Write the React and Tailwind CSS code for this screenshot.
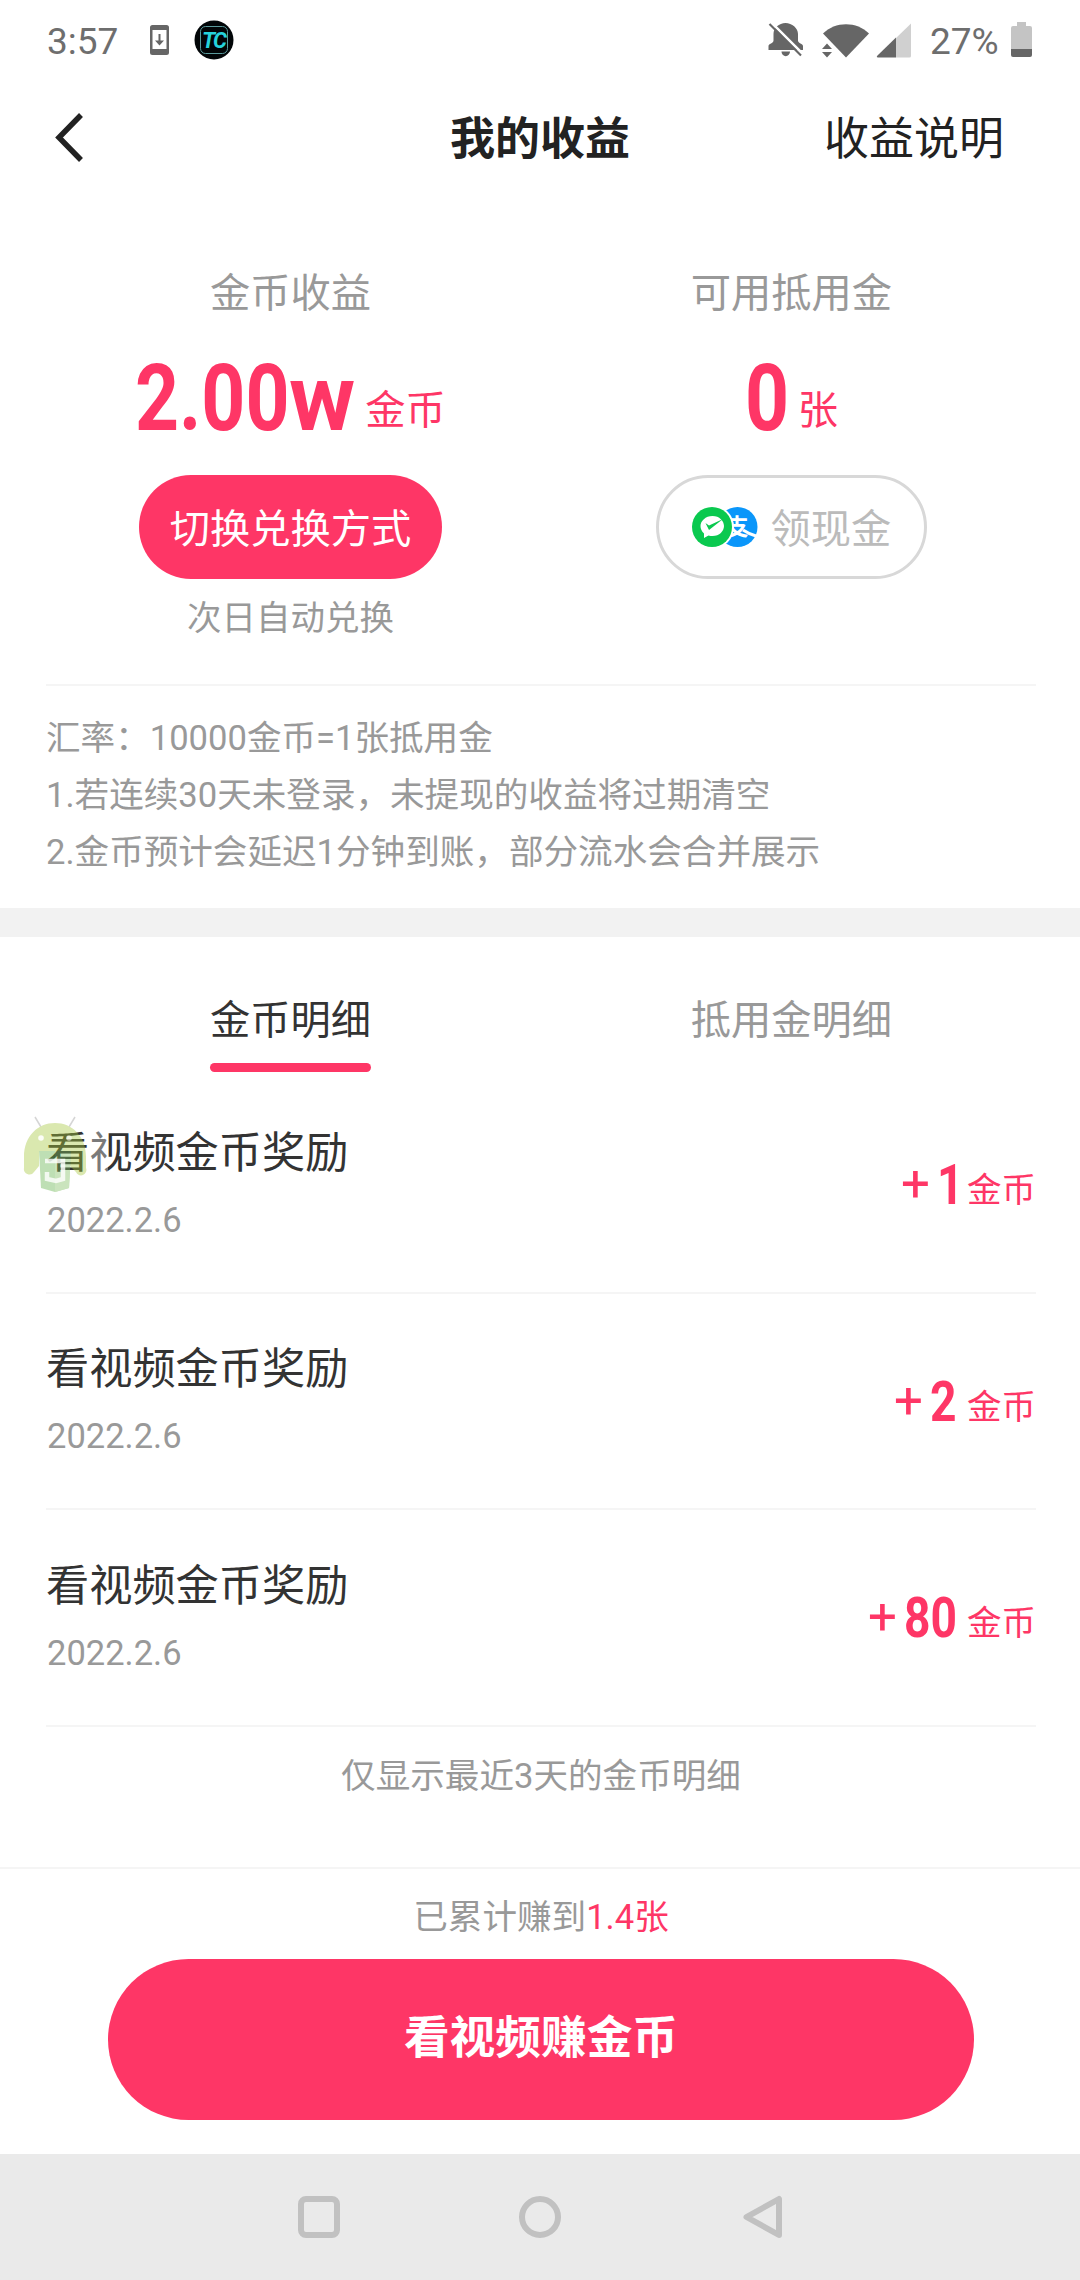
import React from 'react';

const records = [
  { title: '看视频金币奖励', date: '2022.2.6', amount: '1', width: 'w-[20px]' },
  { title: '看视频金币奖励', date: '2022.2.6', amount: '2', width: 'w-[27px]' },
  { title: '看视频金币奖励', date: '2022.2.6', amount: '80', width: 'w-[53px]' },
];

const StatusBar = () => {
  return (
    <div className="flex h-[83px] shrink-0 items-center pl-[47px] text-[37px] leading-[48px] text-[#6e6e6e]">
      <span className="w-[103px]">3:57</span>
      <svg className="-mt-[3px] h-[30px] w-[19px]" viewBox="0 0 19 30">
        <path fill="#666" fillRule="evenodd" d="M2.500 0h14A2.500 2.500 0 0 1 19 2.500v25a2.500 2.500 0 0 1-2.500 2.500h-14A2.500 2.500 0 0 1 0 27.500v-25A2.500 2.500 0 0 1 2.500 0zM2.500 5v19h14V5z" />
        <path fill="#666" d="M8.500 9h2v6.500H14L9.500 20.500 5 15.500h3.500z" />
      </svg>
      <svg className="-mt-[3px] ml-[25px] h-[40px] w-[40px]" viewBox="0 0 40 40">
        <circle cx="20" cy="20" r="19.500" fill="#020608" />
        <rect x="6.500" y="6.500" width="27" height="27" rx="5" fill="none" stroke="#5a9a9c" strokeWidth="1" />
        <text x="19.500" y="28" textAnchor="middle" fontFamily="Roboto, sans-serif" fontSize="22" fontWeight="700" fontStyle="italic" letterSpacing="-2" fill="#25d3dc">TC</text>
      </svg>

      <svg className="-mt-[4px] ml-[534px] h-[35px] w-[36px]" viewBox="0 0 36 35">
        <path fill="#666" d="M.500 28v-4c0-2.500 5-2.500 5-5.500V12C5.500 6 11 1 17.500 1S30 6 30 12v6.500c0 3 5 3 5 5.500v4z" />
        <path fill="#666" d="M13.500 29.500h8.500a4.200 4.700 0 0 1-8.500 0z" />
        <path stroke="#fff" strokeWidth="2.600" d="M2.500 -.300 37 34.200" />
        <path stroke="#666" strokeWidth="2.200" d="M1.500 2 33 33.500" />
      </svg>
      <svg className="-mt-[3px] ml-[18px] h-[35px] w-[48px]" viewBox="0 0 48 35">
        <path fill="#666" d="M1 10.500C13 -2 35 -2 47 10.500L24 34.500z" />
        <path fill="#666" d="M0 26h10l-5-5.500zM0 29h10l-5 5.500z" />
      </svg>
      <svg className="-mt-[3px] ml-[6px] h-[35px] w-[36px]" viewBox="0 0 36 35">
        <path fill="#d0d0d0" d="M20 15 35 .500V33a1.500 1.500 0 0 1-1.500 1.500H20z" />
        <path fill="#666" d="M20 14.500v20H2c-1.500 0-1.500-1-.500-2z" />
      </svg>
      <span className="ml-[18px] w-[81px]">27%</span>
      <svg className="-mt-[4px] h-[35px] w-[21px]" viewBox="0 0 21 35">
        <path fill="#c4c4c4" d="M6 0h9v4h4a2 2 0 0 1 2 2v21H0V6a2 2 0 0 1 2-2h4z" />
        <path fill="#666" d="M0 27h21v6a2 2 0 0 1-2 2H2a2 2 0 0 1-2-2z" />
      </svg>
    </div>
  );
};

const Header = () => {
  return (
    <header className="grid h-[112px] shrink-0 grid-cols-3 items-center pt-[2px] text-[45px] leading-[60px] text-[#222]">
      <button className="-mt-[5px] pl-[55px]" aria-label="返回">
        <svg className="h-[50px] w-[30px]" viewBox="0 0 30 50">
          <path fill="none" stroke="#222" strokeWidth="5.500" d="M26 2 4 24.500 26 47" />
        </svg>
      </button>
      <h1 className="text-center font-bold">我的收益</h1>
      <span className="pr-[76px] text-right">收益说明</span>
    </header>
  );
};

const PayIcons = () => {
  return (
    <svg className="h-[42px] w-[68px]" viewBox="0 0 68 42">
      <circle cx="46.500" cy="21" r="20" fill="#0a96fa" />
      <text x="46" y="29" textAnchor="middle" fontFamily="Noto Sans CJK SC, sans-serif" fontSize="23" fontWeight="700" fill="#fff">支</text>
      <path stroke="#fff" strokeWidth="3" d="M52 24q6 4 13 6" fill="none" />
      <circle cx="21" cy="21" r="22" fill="#fff" />
      <circle cx="21" cy="21" r="20" fill="#0ac94f" />
      <path fill="#fff" d="M21.500 10C28.500 10 33 15 33 20s-4.500 10-11.500 10q-2 0-4-.500L13 32v-4.500C10.500 25 9.500 22.500 9.500 20c0-5 5-10 12-10z" />
      <path fill="#0ac94f" d="M14.500 17l3.500 2.500L32 13 18 24z" />
    </svg>
  );
};

const Summary = () => {
  return (
    <section className="ml-[40px] grid h-[489px] w-[1002px] shrink-0 grid-cols-2 pt-[71px] text-[40.25px] leading-[56px] text-[#999]">
      <div className="flex flex-col items-center">
        <div>金币收益</div>
        <div className="mt-[30px] flex h-[94px] items-baseline text-[#fe3666]">
          <span className="w-[154px] whitespace-nowrap">
            <span className="inline-block origin-left scale-x-[0.835] text-[92px] leading-[94px] font-bold">2.00</span>
          </span>
          <span className="w-[76px] whitespace-nowrap">
            <span className="inline-block origin-left scale-x-[0.98] text-[92px] leading-[94px] font-bold">w</span>
          </span>
          <span className="-translate-y-[6px]">金币</span>
        </div>
        <button className="mt-[29px] h-[104px] w-[303px] rounded-full bg-[#fe3666] pt-[5px] text-white">切换兑换方式</button>
        <div className="mt-[15px] text-[34.5px] leading-[48px]">次日自动兑换</div>
      </div>
      <div className="flex flex-col items-center">
        <div>可用抵用金</div>
        <div className="mt-[30px] flex h-[94px] items-baseline text-[#fe3666]">
          <span className="w-[53px] whitespace-nowrap">
            <span className="inline-block origin-left scale-x-[0.835] text-[92px] leading-[94px] font-bold">0</span>
          </span>
          <span className="-translate-y-[6px]">张</span>
        </div>
        <button className="mt-[29px] flex h-[104px] w-[271px] items-center justify-center gap-[12px] rounded-full border-[3px] border-[#d8d8d8] pr-[1px] text-[#bbb]">
          <PayIcons />
          <span className="pt-[5px]">领现金</span>
        </button>
      </div>
    </section>
  );
};

const Notes = () => {
  return (
    <section className="mr-[44px] ml-[46px] h-[224px] shrink-0 border-t-2 border-[#f5f5f5] pt-[24px] text-[34.6px] leading-[57px] text-[#999]">
      <p>汇率：10000金币=1张抵用金</p>
      <p>1.若连续30天未登录，未提现的收益将过期清空</p>
      <p>2.金币预计会延迟1分钟到账，部分流水会合并展示</p>
    </section>
  );
};

const Tabs = () => {
  return (
    <div className="ml-[40px] grid h-[140px] w-[1002px] shrink-0 grid-cols-2 pt-[56px] text-[40.25px] leading-[56px]">
      <div className="flex flex-col items-center text-[#333]">
        <span>金币明细</span>
        <span className="mt-[14px] h-[9px] w-[161px] rounded-full bg-[#fe3666]" />
      </div>
      <div className="text-center text-[#999]">抵用金明细</div>
    </div>
  );
};

const FloatingRobot = () => {
  return (
    <svg className="absolute top-[1112px] left-[20px] h-[86px] w-[92px]" viewBox="0 0 92 86">
      <rect x="68" y="8" width="20" height="70" fill="#fff" opacity="0.350" />
      <g opacity="0.400">
        <path stroke="#999" strokeWidth="1.500" d="M15 5l6 10M55 5l-6 10" />
        <path fill="#a4c639" d="M4 45C4 24 18 11 35 11s31 13 31 34v11a5 5 0 0 1-10 4l-6-6V40H19v14l-5 6a5.500 5.500 0 0 1-10-4z" />
        <path fill="#5fb045" d="M19 39h32l-2 37-14 4-14-4z" />
        <path fill="#7dbd5c" d="M35 39h16l-2 37-14 4z" />
      </g>
      <circle cx="21" cy="26" r="2.800" fill="#fff" opacity="0.900" />
      <circle cx="49" cy="26" r="2.800" fill="#fff" opacity="0.600" />
      <path fill="none" stroke="#fff" strokeWidth="4.500" opacity="0.800" d="M25 49h18v18l-7 2-9-2v-7" />
    </svg>
  );
};

const RecordItem = ({ title, date, amount, width }) => {
  return (
    <li className="flex h-[216.5px] justify-between border-b-2 border-[#f5f5f5]">
      <div>
        <div className="mt-[46.5px] text-[43.2px] leading-[60px] text-[#333]">{title}</div>
        <div className="mt-[12px] pl-[1px] text-[34.5px] leading-[48px] text-[#999]">{date}</div>
      </div>
      <div className="mt-[78px] flex h-[60px] items-baseline text-[34.5px] leading-[60px] text-[#fe3666]">
        <span className="mr-[7px] -translate-y-[3px] text-[51px]">+</span>
        <span className={`${width} mr-[10px] whitespace-nowrap`}>
          <span className="inline-block origin-left scale-x-[0.84] text-[55px] leading-[60px] font-bold">{amount}</span>
        </span>
        <span className="-translate-y-[2px]">金币</span>
      </div>
    </li>
  );
};

const NavBar = () => {
  return (
    <nav className="flex h-[126px] shrink-0 items-center bg-[#eaeaea] pl-[298px]">
      <svg className="h-[44px] w-[486px]" viewBox="0 0 486 44" fill="none" stroke="#c1c1c1" strokeWidth="6">
        <rect x="3" y="4" width="36" height="36" rx="5" />
        <circle cx="242" cy="22" r="18" />
        <path strokeLinejoin="round" d="M481 4v36L448.500 22z" />
      </svg>
    </nav>
  );
};

const App = () => {
  return (
    <div className="relative flex h-[2280px] w-[1080px] flex-col overflow-hidden bg-white font-[Roboto,'Noto_Sans_CJK_SC',sans-serif]">
      <StatusBar />
      <Header />
      <Summary />
      <Notes />
      <div className="h-[29px] shrink-0 bg-[#f2f2f2]" />
      <Tabs />
      <ul className="mr-[44px] ml-[46px]">
        {records.map((record) => (
          <RecordItem key={record.amount} {...record} />
        ))}
      </ul>
      <div className="mt-[25px] pl-[2px] text-center text-[34.6px] leading-[48px] text-[#999]">仅显示最近3天的金币明细</div>
      <footer className="mt-auto flex h-[287px] shrink-0 flex-col items-center border-t-2 border-[#f5f5f5] pt-[24px] pl-[2px]">
        <div className="text-[34.6px] leading-[48px] text-[#999]">
          已累计赚到<span className="text-[#fe3666]">1.4张</span>
        </div>
        <button className="mt-[18px] h-[161px] w-[866px] rounded-full bg-[#fe3666] text-[45.7px] font-bold text-white">
          看视频赚金币
        </button>
      </footer>
      <NavBar />
      <FloatingRobot />
    </div>
  );
};

export default App;
